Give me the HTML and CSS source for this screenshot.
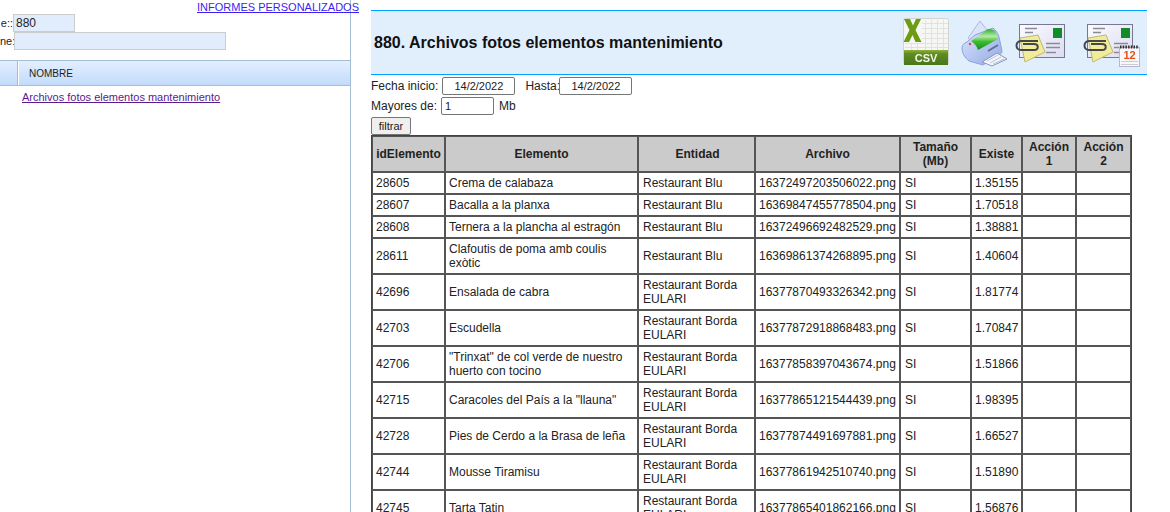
FILE: index.html
```html
<!DOCTYPE html>
<html lang="es">
<head>
<meta charset="utf-8">
<title>Informes</title>
<link rel="stylesheet" href="styles.css">
</head>
<body>
<div class="page">
  <aside class="side">
    <div class="side-top"><a class="report-link" href="#">INFORMES PERSONALIZADOS</a></div>
    <div class="side-form">
      <div class="side-row"><span class="side-label">e::</span><input class="side-input short" value="880"></div>
      <div class="side-row"><span class="side-label">ne:</span><input class="side-input long" value=""></div>
    </div>
    <div class="grid-head">
      <div class="grid-cell first"></div>
      <div class="grid-cell">NOMBRE</div>
    </div>
    <div class="grid-body"><a class="grid-link" href="#">Archivos fotos elementos mantenimiento</a></div>
  </aside>
  <main class="main">
    <header class="banner">
      <h1 class="title">880. Archivos fotos elementos mantenimiento</h1>
      <div class="tools">
        <svg class="ic-csv" width="46" height="48" viewBox="0 0 46 48">
          <defs>
            <linearGradient id="band" x1="0" y1="0" x2="0" y2="1"><stop offset="0" stop-color="#8fb23a"/><stop offset="0.25" stop-color="#5f8c22"/><stop offset="1" stop-color="#49761a"/></linearGradient>
          </defs>
          <rect x="0.5" y="0.5" width="45" height="46" rx="2" fill="#f6f7f5" stroke="#d2d5cf"/>
          <path d="M19 5.5H45M19 10.5H45M19 15.5H45M19 20.5H45M2 25.5H45M2 29.5H45M22.5 2V32M28.5 2V32M34.5 2V32M40.5 2V32M8.5 25V32M14.5 25V32" stroke="#dfe3dd" fill="none"/>
          <path d="M1 1H7L10 7.5L13 1H18L12.5 12L18.5 24H12.5L9.5 17L6 24H0.5L6.5 12Z" fill="#6d9c14"/>
          <rect x="1" y="32" width="44" height="15" fill="url(#band)"/>
          <text class="csv-text" x="23" y="44" text-anchor="middle">CSV</text>
        </svg>
        <svg class="ic-print" width="47" height="48" viewBox="0 0 47 48">
          <defs>
            <linearGradient id="hood" x1="0" y1="0" x2="0" y2="1"><stop offset="0" stop-color="#2db026"/><stop offset="0.35" stop-color="#b4eca6"/><stop offset="0.6" stop-color="#3cbc30"/><stop offset="1" stop-color="#158e18"/></linearGradient>
            <linearGradient id="pbody" x1="0" y1="0" x2="1" y2="1"><stop offset="0" stop-color="#dbe5fb"/><stop offset="1" stop-color="#93a9e6"/></linearGradient>
          </defs>
          <path d="M7 18L19 1L26 10L14 24Z" fill="#dbe4f8" stroke="#a9b8e0"/>
          <path d="M1 28C1 25 3 23 6 22L14 15L32 8C35 10 37 14 38 17L41 31C41 33 40 34 38 35L22 45L8 41C4 38 1 33 1 28Z" fill="url(#pbody)" stroke="#8ca1da" stroke-linejoin="round"/>
          <path d="M10 21L27 9C31 9 34 10 35 13L37 19L17 30C16 26 13 23 10 21Z" fill="url(#hood)"/>
          <path d="M21 42L36 33L46 39L31 46Z" fill="#f4f6fc" stroke="#8a94b2"/>
          <path d="M26 41L37 35M29 43L40 37M32 44L43 39" stroke="#b5c1de" fill="none"/>
          <path d="M27 31L37 25" stroke="#5f6f9c" stroke-width="2"/>
          <circle cx="9" cy="24" r="1.2" fill="#e0483f"/>
        </svg>
        <svg class="ic-mail" width="50" height="40" viewBox="0 0 50 40">
          <defs>
            <linearGradient id="env" x1="0" y1="0" x2="1" y2="1"><stop offset="0" stop-color="#fbfbff"/><stop offset="1" stop-color="#dcdcf2"/></linearGradient>
          </defs>
          <rect x="4.5" y="0.5" width="45" height="33" fill="url(#env)" stroke="#77778f"/>
          <path d="M10 4.5H22M10 8.5H18M31 19.5H45M31 23.5H45M31 28.5H41" stroke="#8b8b95" stroke-width="1.6" fill="none"/>
          <rect x="38" y="4" width="9" height="10" fill="#128c2a"/>
          <path d="M5 14L23 11L30 28L10 38Z" fill="#f1ec9a" stroke="#bdb96e"/>
          <path d="M23 17H6C0 17 0 26 6 26H19C24 26 24 20 19 20H8" fill="none" stroke="#45454c" stroke-width="2"/>
        </svg>
        <svg class="ic-mail-cal" width="58" height="44" viewBox="0 0 58 44">
          <rect x="4.5" y="0.5" width="45" height="33" fill="url(#env)" stroke="#77778f"/>
          <path d="M10 4.5H22M10 8.5H18M31 19.5H45M31 23.5H45M31 28.5H41" stroke="#8b8b95" stroke-width="1.6" fill="none"/>
          <rect x="38" y="4" width="9" height="10" fill="#128c2a"/>
          <path d="M5 14L23 11L30 28L10 38Z" fill="#f1ec9a" stroke="#bdb96e"/>
          <path d="M23 17H6C0 17 0 26 6 26H19C24 26 24 20 19 20H8" fill="none" stroke="#45454c" stroke-width="2"/>
          <rect x="36.5" y="23.5" width="20" height="19" fill="#f8f8fc" stroke="#b8b8ca"/>
          <path d="M37 23H56" stroke="#2d2d33" stroke-width="3" stroke-dasharray="1.5 1.2"/>
          <text class="cal-text" x="46.5" y="35" text-anchor="middle">12</text>
          <path d="M38 37.5H55M38 40.5H55" stroke="#cacad8"/>
        </svg>
      </div>
    </header>
    <div class="filters">
      <div class="filter-row">
        <label class="flabel">Fecha inicio:</label>
        <input class="date" value="14/2/2022">
        <label class="flabel hasta">Hasta:</label>
        <input class="date" value="14/2/2022">
      </div>
      <div class="filter-row second">
        <label class="flabel">Mayores de:</label>
        <input class="mb" value="1">
        <span class="flabel unit">Mb</span>
      </div>
      <button class="btn">filtrar</button>
    </div>
    <table class="data">
      <colgroup>
        <col class="c1"><col class="c2"><col class="c3"><col class="c4"><col class="c5"><col class="c6"><col class="c7"><col class="c8">
      </colgroup>
      <thead>
        <tr><th>idElemento</th><th>Elemento</th><th>Entidad</th><th>Archivo</th><th>Tamaño<br>(Mb)</th><th>Existe</th><th>Acción<br>1</th><th>Acción<br>2</th></tr>
      </thead>
      <tbody>
        <tr><td>28605</td><td>Crema de calabaza</td><td>Restaurant Blu</td><td>16372497203506022.png</td><td>SI</td><td>1.35155</td><td></td><td></td></tr>
        <tr><td>28607</td><td>Bacalla a la planxa</td><td>Restaurant Blu</td><td>16369847455778504.png</td><td>SI</td><td>1.70518</td><td></td><td></td></tr>
        <tr><td>28608</td><td>Ternera a la plancha al estragón</td><td>Restaurant Blu</td><td>16372496692482529.png</td><td>SI</td><td>1.38881</td><td></td><td></td></tr>
        <tr><td>28611</td><td>Clafoutis de poma amb coulis exòtic</td><td>Restaurant Blu</td><td>16369861374268895.png</td><td>SI</td><td>1.40604</td><td></td><td></td></tr>
        <tr><td>42696</td><td>Ensalada de cabra</td><td>Restaurant Borda EULARI</td><td>16377870493326342.png</td><td>SI</td><td>1.81774</td><td></td><td></td></tr>
        <tr><td>42703</td><td>Escudella</td><td>Restaurant Borda EULARI</td><td>16377872918868483.png</td><td>SI</td><td>1.70847</td><td></td><td></td></tr>
        <tr><td>42706</td><td>"Trinxat" de col verde de nuestro huerto con tocino</td><td>Restaurant Borda EULARI</td><td>16377858397043674.png</td><td>SI</td><td>1.51866</td><td></td><td></td></tr>
        <tr><td>42715</td><td>Caracoles del País a la "llauna"</td><td>Restaurant Borda EULARI</td><td>16377865121544439.png</td><td>SI</td><td>1.98395</td><td></td><td></td></tr>
        <tr><td>42728</td><td>Pies de Cerdo a la Brasa de leña</td><td>Restaurant Borda EULARI</td><td>16377874491697881.png</td><td>SI</td><td>1.66527</td><td></td><td></td></tr>
        <tr><td>42744</td><td>Mousse Tiramisu</td><td>Restaurant Borda EULARI</td><td>16377861942510740.png</td><td>SI</td><td>1.51890</td><td></td><td></td></tr>
        <tr><td>42745</td><td>Tarta Tatin</td><td>Restaurant Borda EULARI</td><td>16377865401862166.png</td><td>SI</td><td>1.56876</td><td></td><td></td></tr>
      </tbody>
    </table>
  </main>
</div>
</body>
</html>
```
FILE: styles.css
```css
* { box-sizing: border-box; }
html, body { margin: 0; padding: 0; height: 512px; overflow: hidden; background: #fff; }
body { font-family: "Liberation Sans", Arial, sans-serif; font-size: 12px; color: #222; }
.page { display: flex; height: 512px; }
.side { width: 351px; flex: none; height: 512px; border-right: 1px solid #a4bed4; }
.side-top { height: 14px; margin-right: -9px; text-align: right; padding-top: 1px; line-height: 13px; }
.report-link { font-size: 11px; color: #3a1ff0; }
.side-form { height: 46px; }
.side-row { display: flex; align-items: center; height: 18px; }
.side-label { width: 13px; flex: none; font-size: 11px; white-space: nowrap; text-align: right; color: #222; }
.side-input { height: 18px; border: 1px solid #ccc; background: #e1edfd; padding: 0 2px; font: 12px "Liberation Sans", sans-serif; color: #222; }
.short { width: 62px; }
.long { width: 212px; margin-left: 1px; }
.grid-head { display: flex; height: 26px; border-top: 1px solid #a4bed4; border-bottom: 1px solid #a4bed4; background: linear-gradient(#e3efff, #c3dbfb); }
.grid-cell { font-size: 10px; line-height: 26px; padding-left: 10px; border-left: 1px solid #fff; color: #222; flex: 1; }
.grid-cell.first { flex: none; width: 18px; padding: 0; border-left: 0; border-right: 1px solid #a4bed4; }
.grid-body { padding: 4px 0 0 22px; }
.grid-link { color: #5a1a90; font-size: 11px; }
.main { width: 780px; flex: none; margin-left: 20px; padding-top: 10px; }
.banner { width: 776px; height: 65px; display: flex; justify-content: space-between; align-items: center; background: #e1effd; border-top: 1px solid #00a2ff; border-bottom: 1px solid #00a2ff; padding-left: 3px; }
.title { margin: 0; font-size: 16px; font-weight: bold; color: #111; }
.tools { display: flex; align-items: flex-start; align-self: flex-start; margin-right: 6px; }
.tools svg { display: block; flex: none; filter: blur(0.35px); }
.ic-csv { margin-top: 7px; }
.ic-print { margin-top: 9px; margin-left: 12px; }
.ic-mail { margin-top: 13px; margin-left: 7px; }
.ic-mail-cal { margin-top: 13px; margin-left: 18px; }
.csv-text { font: bold 11px "Liberation Sans", sans-serif; fill: #f4f4ec; }
.cal-text { font: bold 11px "Liberation Sans", sans-serif; fill: #e8501c; }
.filters { padding-top: 2px; }
.filter-row { display: flex; align-items: center; height: 18px; }
.filter-row.second { margin-top: 2px; }
.flabel { color: #222; font-size: 12px; }
.hasta { margin-left: 10px; width: 34px; flex: none; }
.date { width: 73px; height: 18px; margin-left: 4px; border: 1px solid #767676; border-radius: 2px; font: 11px "Liberation Sans", sans-serif; text-align: center; padding: 0; color: #222; }
.hasta + .date { margin-left: 0; }
.mb { width: 53px; height: 18px; margin-left: 4px; border: 1px solid #767676; border-radius: 2px; font: 11px "Liberation Sans", sans-serif; padding: 0 3px; color: #222; }
.unit { margin-left: 5px; }
.btn { display: block; margin-top: 2px; width: 40px; height: 18px; border: 1px solid #767676; border-radius: 2px; background: #efefef; font: 11px "Liberation Sans", sans-serif; padding: 0; color: #222; }
.data { border-collapse: separate; border-spacing: 0; border: 1px solid #444; table-layout: fixed; width: 759px; }
.c1 { width: 73px; } .c2 { width: 193px; } .c3 { width: 117px; } .c4 { width: 145px; } .c5 { width: 71px; } .c6 { width: 51px; } .c7 { width: 54px; } .c8 { width: 55px; }
.data th, .data td { border: 1px solid #555; font-size: 12px; }
.data th { background: #cbcbcb; height: 36px; padding: 0 1px; font-weight: bold; color: #222; line-height: 14px; }
.data th:nth-child(3) { padding-left: 3px; }
.data td { padding: 0 3px; height: 22px; line-height: 14px; color: #222; }
.data td:nth-child(3), .data td:nth-child(5) { padding-left: 4px; }
.data tbody tr:nth-child(n+4) td { height: 36px; }
```
